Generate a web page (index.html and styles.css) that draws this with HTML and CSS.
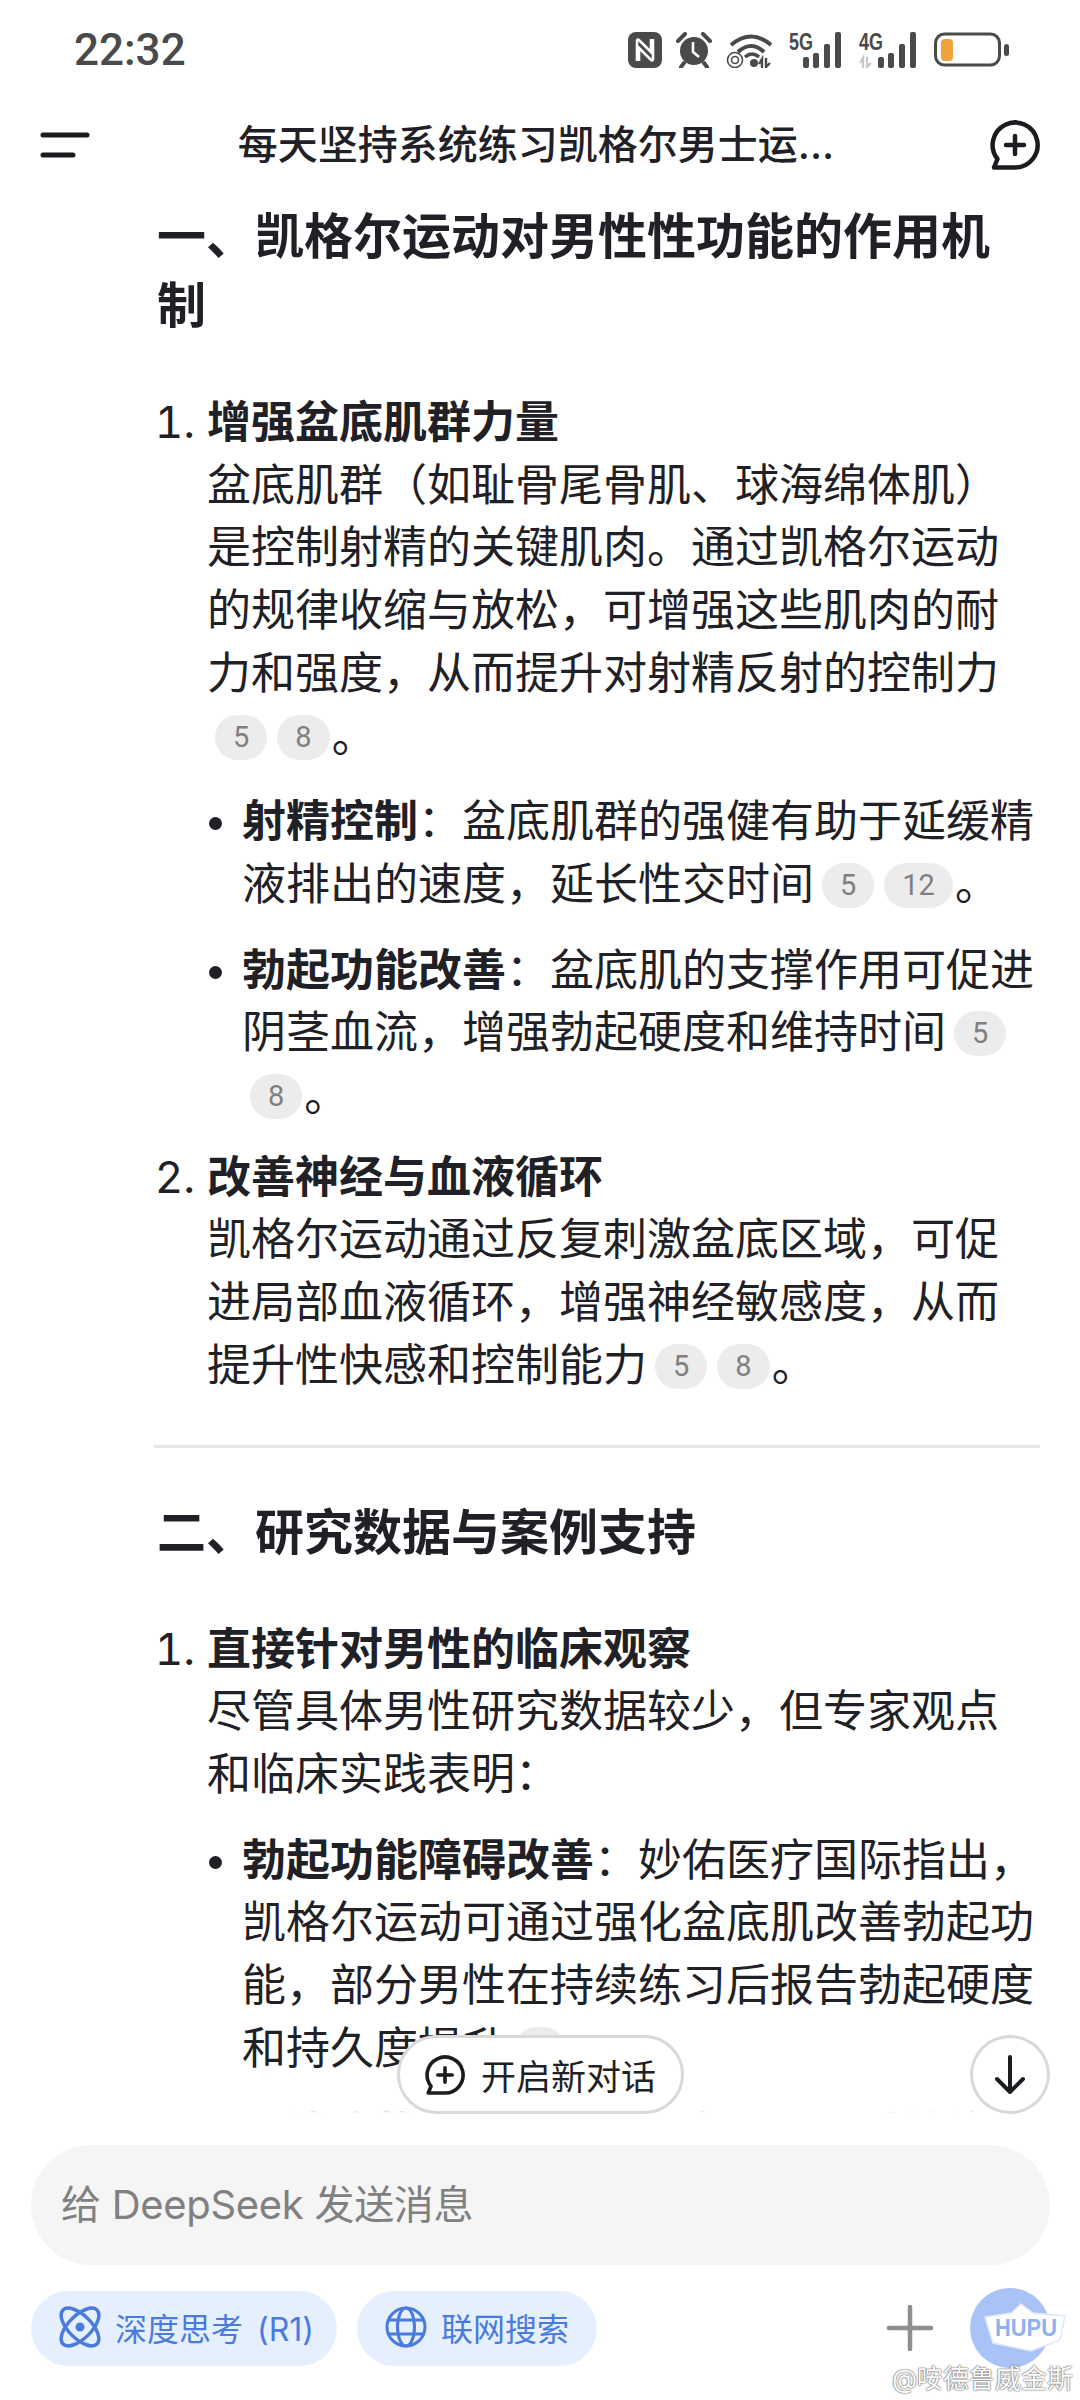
FILE: index.html
```html
<!DOCTYPE html>
<html lang="zh-CN">
<head>
    <meta charset="UTF-8">
    <meta name="viewport" content="width=device-width, initial-scale=1.0">
    <title>DeepSeek</title>
    <link rel="stylesheet" href="styles.css">
</head>
<body>
<div class="screen">

    <div class="status-bar">
        <span class="time">22:32</span>
        <div class="status-icons">
            <svg class="ic-nfc" viewBox="0 0 34 36"><rect width="34" height="36" rx="8" fill="#4a4a4a"/><path d="M9 29V9q0-2 2-1l12 12V7M25 7v20q0 2-2 1L11 16v13" fill="none" stroke="#fff" stroke-width="2.6"/></svg>
            <svg class="ic-alarm" viewBox="0 0 36 36"><circle cx="18" cy="19" r="14" fill="#4a4a4a"/><path d="M2 9 9 2M34 9 27 2M8 31 5 35M28 31 31 35" stroke="#4a4a4a" stroke-width="4" stroke-linecap="round"/><path d="M17 10v10l6 5" fill="none" stroke="#fff" stroke-width="2.6"/></svg>
            <svg class="ic-wifi" viewBox="0 0 49 36"><g fill="none" stroke="#4a4a4a" stroke-width="4"><path d="M5 13Q25-4 45 13"/><path d="M12 20Q25 8 38 20"/></g><path d="M19 25Q26 19 33 25" fill="none" stroke="#4a4a4a" stroke-width="3.5"/><circle cx="28" cy="31" r="4" fill="#4a4a4a"/><g fill="none" stroke="#4a4a4a" stroke-width="1.6"><circle cx="9" cy="28" r="7.5"/><circle cx="9" cy="28" r="3.5"/></g><path d="M36 36V27l-3 5M40 26v9l4-4" fill="none" stroke="#4a4a4a" stroke-width="2.4"/></svg>
            <svg class="ic-sig5" viewBox="0 0 56 36"><text x="0" y="18" class="net-label" textLength="24" lengthAdjust="spacingAndGlyphs">5G</text><rect x="14" y="25" width="6" height="11" rx="2"/><rect x="24" y="21" width="6" height="15" rx="2"/><rect x="35" y="12" width="6" height="24" rx="2"/><rect x="46" y="0" width="6" height="36" rx="2"/></svg>
            <svg class="ic-sig4" viewBox="0 0 61 36"><text x="0" y="18" class="net-label" textLength="24" lengthAdjust="spacingAndGlyphs">4G</text><path d="M4 36V26l-3 5M8 25v10l4-4" fill="none" stroke="#c8c8c8" stroke-width="2.2"/><rect x="19" y="25" width="6" height="11" rx="2"/><rect x="29" y="21" width="6" height="15" rx="2"/><rect x="40" y="12" width="6" height="24" rx="2"/><rect x="51" y="0" width="6" height="36" rx="2"/></svg>
            <svg class="ic-battery" viewBox="0 0 75 36"><rect x="1.5" y="2" width="64" height="31" rx="9" fill="none" stroke="#4a4a4a" stroke-width="3"/><rect x="7" y="7" width="12" height="22" rx="4" fill="#f0a23c"/><rect x="70" y="12" width="5" height="12" rx="2.5" fill="#4a4a4a"/></svg>
        </div>
    </div>

    <div class="top-bar">
        <svg class="ic-menu" viewBox="0 0 50 26"><path d="M3 3H47M3 23H33" stroke="#1b1c20" stroke-width="5" stroke-linecap="round"/></svg>
        <div class="chat-title">每天坚持系统练习凯格尔男士运...</div>
        <svg class="ic-newchat" viewBox="0 0 50 50"><path d="M25 47.500H4L7.500 39A22.500 22.500 0 1 1 25 47.500Z" fill="none" stroke="#1b1c20" stroke-width="4.500" stroke-linejoin="round"/><path d="M25 16V34M16 25H34" stroke="#1b1c20" stroke-width="4.500" stroke-linecap="round"/></svg>
    </div>

    <div class="content">
        <h2>一、凯格尔运动对男性性功能的作用机制</h2>
        <ol>
            <li>
                <strong>增强盆底肌群力量</strong><br>
                盆底肌群（如耻骨尾骨肌、球海绵体肌）是控制射精的关键肌肉。通过凯格尔运动的规律收缩与放松，可增强这些肌肉的耐力和强度，从而提升对射精反射的控制力<span class="cite">5</span><span class="cite">8</span>。
                <ul>
                    <li><strong>射精控制</strong>：盆底肌群的强健有助于延缓精液排出的速度，延长性交时间<span class="cite">5</span><span class="cite">12</span>。</li>
                    <li><strong>勃起功能改善</strong>：盆底肌的支撑作用可促进阴茎血流，增强勃起硬度和维持时间<span class="cite">5</span><span class="cite">8</span>。</li>
                </ul>
            </li>
            <li>
                <strong>改善神经与血液循环</strong><br>
                凯格尔运动通过反复刺激盆底区域，可促进局部血液循环，增强神经敏感度，从而提升性快感和控制能力<span class="cite">5</span><span class="cite">8</span>。
            </li>
        </ol>
        <hr>
        <h2>二、研究数据与案例支持</h2>
        <ol>
            <li>
                <strong>直接针对男性的临床观察</strong><br>
                尽管具体男性研究数据较少，但专家观点和临床实践表明：
                <ul>
                    <li><strong>勃起功能障碍改善</strong>：妙佑医疗国际指出，凯格尔运动可通过强化盆底肌改善勃起功能，部分男性在持续练习后报告勃起硬度和持久度提升<span class="cite">5</span>。</li>
                    <li><strong>早泄症状缓解</strong>：部分研究显示，系统练习后射精控制时间有所延长。</li>
                </ul>
            </li>
        </ol>
    </div>

    <div class="composer">
        <div class="msg-input">给 DeepSeek 发送消息</div>
        <div class="tool-row">
            <div class="tool-chip tool-think">
                <svg class="ic-tool" viewBox="0 0 42 42"><g fill="none" stroke="#4a7bdc" stroke-width="3.500"><ellipse cx="21" cy="21" rx="24" ry="11.500" transform="rotate(45 21 21)"/><ellipse cx="21" cy="21" rx="24" ry="11.500" transform="rotate(-45 21 21)"/></g><circle cx="21" cy="21" r="4.500" fill="#4a7bdc"/></svg>
                深度思考 (R1)
            </div>
            <div class="tool-chip">
                <svg class="ic-tool" viewBox="0 0 42 42"><g fill="none" stroke="#4a7bdc" stroke-width="3"><circle cx="21" cy="21" r="19"/><ellipse cx="21" cy="21" rx="8.500" ry="19"/><path d="M3 14H39M3 28H39"/></g></svg>
                联网搜索
            </div>
            <svg class="ic-plus" viewBox="0 0 46 46"><path d="M23 2V44M2 23H44" stroke="#8f8f8f" stroke-width="4.500" stroke-linecap="round"/></svg>
            <div class="send-btn"></div>
        </div>
    </div>

    <div class="float-row">
        <div class="new-chat-btn">
            <svg class="ic-newchat-sm" viewBox="0 0 50 50"><path d="M25 47.500H4L7.500 39A22.500 22.500 0 1 1 25 47.500Z" fill="none" stroke="#1b1c20" stroke-width="4.500" stroke-linejoin="round"/><path d="M25 16V34M16 25H34" stroke="#1b1c20" stroke-width="4.500" stroke-linecap="round"/></svg>
            开启新对话
        </div>
        <div class="down-btn">
            <svg class="ic-down" viewBox="0 0 32 40"><path d="M16 2V37M3 24 16 37 29 24" fill="none" stroke="#1b1c20" stroke-width="4" stroke-linecap="round" stroke-linejoin="round"/></svg>
        </div>
    </div>

    <svg class="hupu" viewBox="0 0 84 50"><path d="M2 14 28 10 38 1 50 10 82 13 77 37 48 48 10 40Z" fill="#fff" stroke="#dfe8f9" stroke-width="1.500"/><text x="12" y="33" class="hupu-text" textLength="62" lengthAdjust="spacingAndGlyphs">HUPU</text></svg>
    <div class="watermark">@咹德鲁威金斯</div>
</div>
</body>
</html>
```

FILE: styles.css
```css
* {
    box-sizing: border-box;
}

body {
    margin: 0;
    background-color: #fff;
    font-family: Inter, "Noto Sans CJK SC", sans-serif;
    color: #1f2126;
}

.screen {
    position: relative;
    width: 1080px;
    height: 2400px;
    display: flex;
    flex-direction: column;
    overflow: hidden;
}

/* status bar */
.status-bar {
    height: 100px;
    flex-shrink: 0;
    display: flex;
    justify-content: space-between;
    align-items: center;
    padding: 0 71px 0 74px;
}

.time {
    font-family: Roboto, sans-serif;
    font-size: 44px;
    font-weight: 500;
    color: #4a4a4a;
}

.status-icons {
    display: flex;
    align-items: center;
    gap: 14px;
}

.status-icons svg {
    height: 36px;
    fill: #4a4a4a;
}

.ic-nfc { width: 34px; }
.ic-alarm { width: 36px; }
.ic-wifi { width: 49px; }
.ic-sig5 { width: 56px; }
.ic-sig4 { width: 61px; }
.ic-battery { width: 75px; }

.net-label {
    font-family: "Liberation Sans", sans-serif;
    font-size: 23px;
    font-weight: 700;
}

/* top bar */
.top-bar {
    height: 90px;
    flex-shrink: 0;
    display: flex;
    align-items: center;
    justify-content: space-between;
    padding: 0 40px;
}

.ic-menu {
    width: 50px;
    height: 26px;
}

.chat-title {
    margin-right: 8px;
    font-size: 40px;
    font-weight: 500;
    line-height: 56px;
}

.ic-newchat {
    width: 50px;
    height: 50px;
}

/* article */
.content {
    flex: 1;
    min-height: 0;
    overflow: hidden;
    padding: 12px 40px 0 157px;
    font-size: 44px;
    line-height: 62.700px;
}

.content h2 {
    margin: 0 40px 0 0;
    font-size: 49px;
    line-height: 69px;
    font-weight: 700;
}

.content ol {
    margin: 51px 0 0;
    padding-left: 50px;
}

.content ol > li + li {
    margin-top: 19px;
}

.content ul {
    margin: 23px 0 0;
    padding-left: 35px;
    list-style-type: disc;
}

.content ul li::marker {
    font-size: 40px;
}

.content ul li + li {
    margin-top: 23px;
}

.content strong {
    font-weight: 700;
}

.content hr {
    height: 3px;
    margin: 48px 0 0 -3px;
    border: none;
    background-color: #e6e6e6;
}

.content hr + h2 {
    margin-top: 50px;
}

.cite {
    display: inline-block;
    min-width: 50px;
    height: 45px;
    margin: 0 2px 0 8px;
    padding: 0 18px;
    border-radius: 23px;
    background-color: #ececec;
    color: #808080;
    font-family: Roboto, sans-serif;
    font-size: 29px;
    line-height: 45px;
    text-align: center;
    vertical-align: 5px;
}

/* bottom composer */
.composer {
    flex-shrink: 0;
    position: relative;
    height: 287px;
    padding: 32px 30px 0 31px;
    background-color: #fff;
}

.composer::before {
    content: "";
    position: absolute;
    left: 0;
    right: 0;
    top: -12px;
    height: 12px;
    background: linear-gradient(rgba(255, 255, 255, 0), #fff);
}

.msg-input {
    height: 120px;
    padding-left: 30px;
    border-radius: 60px;
    background-color: #f5f5f5;
    color: #808080;
    font-size: 40px;
    letter-spacing: -0.300px;
    line-height: 120px;
}

.tool-row {
    display: flex;
    align-items: center;
    gap: 20px;
    margin-top: 23px;
}

.tool-chip {
    height: 75px;
    display: flex;
    align-items: center;
    gap: 14px;
    padding: 0 28px 2px;
    border-radius: 38px;
    background-color: #e6effd;
    color: #4a7bdc;
    font-size: 32px;
}

.tool-think {
    padding-right: 23px;
    word-spacing: 5px;
}

.ic-tool {
    width: 42px;
    height: 42px;
    flex-shrink: 0;
}

.ic-plus {
    width: 46px;
    height: 46px;
    margin-left: auto;
    margin-right: 17px;
}

.send-btn {
    width: 80px;
    height: 80px;
    border-radius: 50%;
    background-color: #a9c3f6;
}

/* floating buttons over the article */
.float-row {
    position: absolute;
    left: 397px;
    right: 30px;
    top: 2035px;
    display: flex;
    justify-content: space-between;
}

.new-chat-btn {
    width: 287px;
    height: 79px;
    display: flex;
    align-items: center;
    gap: 16px;
    padding-left: 25px;
    border: 3px solid #d9d9d9;
    border-radius: 40px;
    background-color: #fff;
    font-size: 35px;
}

.ic-newchat-sm {
    width: 40px;
    height: 40px;
}

.down-btn {
    width: 80px;
    height: 79px;
    display: flex;
    align-items: center;
    justify-content: center;
    border: 3px solid #d9d9d9;
    border-radius: 50%;
    background-color: #fff;
}

.ic-down {
    width: 32px;
    height: 40px;
}

/* watermark */
.hupu {
    position: absolute;
    left: 983px;
    top: 2303px;
    width: 84px;
    height: 50px;
}

.hupu-text {
    font-family: "Liberation Sans", sans-serif;
    font-size: 24px;
    font-weight: 700;
    fill: #8fb0ef;
}

.watermark {
    position: absolute;
    left: 892px;
    top: 2362px;
    font-size: 26px;
    line-height: 34px;
    color: #fff;
    white-space: nowrap;
    text-shadow: 0 0 2px #555, 0 0 1px #555;
}
```
